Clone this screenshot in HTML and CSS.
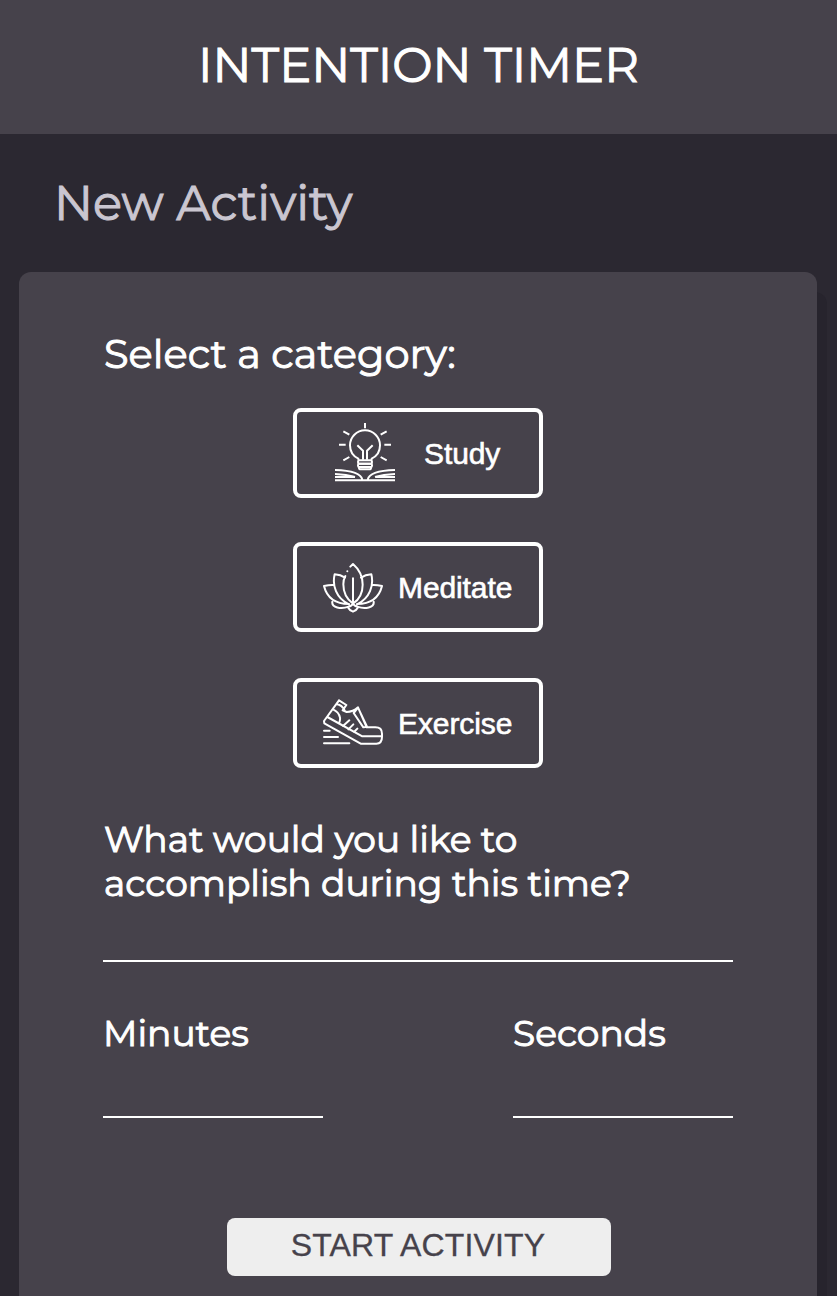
FILE: index.html
```
<!DOCTYPE html>
<html lang="en">
<head>
<meta charset="utf-8">
<title>Intention Timer</title>
<link rel="stylesheet" href="styles.css">
</head>
<body>
<header class="header"><h1 class="title">INTENTION TIMER</h1></header>
<main class="main">
<h2 class="subtitle">New Activity</h2>
<form class="card">
<p class="category-label">Select a category:</p>
<div class="categories">
<button type="button" class="category study">
<svg class="icon" viewBox="150 67 180 180"><path d="M240 67v16M175 92l18 10M305 92l-18 10M162 132h20M298 132h20M175 179l18-10M305 179l-18-10M220 178v-4C203 166 195 150 195 134a45 45 0 0 1 90 0c0 16-8 32-25 40v4M217 134l17 16v27M263 134l-17 16v27"/><rect x="219" y="179" width="42" height="10" rx="4"/><rect x="219" y="189" width="42" height="10" rx="4"/><path d="M222 199v3q0 4 5 4h26q5 0 5-4v-3M150 239h180M150 208c40 1 78 8 82 29M330 208c-40 1-78 8-82 29M150 220q35 2 60 9M150 229h60M330 220q-35 2-60 9M330 229h-60"/></svg>
<span>Study</span></button>
<button type="button" class="category">
<svg class="icon" viewBox="114 66 180 180"><path d="M204 130v77M196 95l8-8c15 13 29 36 29 62 0 24-11 45-29 57-20-14-29-34-29-58 0-9 2-18 6-25M187 109v.1M180 128q-13-9-31-10c-8 33 4 71 43 90M228 128q13-9 31-10c8 33-4 71-43 90M147 150q-13-1-30 3c8 32 32 54 75 54M261 150q13-1 30 3c-8 32-32 54-75 54M142 200c-3 18 26 23 49 15M266 200c3 18-26 23-49 15M188 216q10-2 16-9 6 7 16 9-6 11-16 14-10-3-16-14z"/></svg>
<span>Meditate</span></button>
<button type="button" class="category exercise">
<svg class="icon" viewBox="114 63 180 180"><path d="M162 85l-45 62 1 7 109 61h47c14 0 17-9 17-20v-10c0-13-7-19-20-19h-26l-26-60q-15 14-34 14l-12-5 11-16-22-14M127 135l105 58h59M154 96q18 3 25 20M144 112q18 8 21 25c1 8-1 13-3 18M206 123l13-16 27 57-11 2zM174 162l19-17M190 172l15-15M207 180l10-10M117 176h17M117 195h42M117 214h76"/></svg>
<span>Exercise</span></button>
</div>
<label class="question"><span class="question-text"><span class="line">What would you like to</span><span class="line">accomplish during this time?</span></span><input class="field"></label>
<div class="times">
<label class="time"><span>Minutes</span><input class="field"></label>
<label class="time"><span>Seconds</span><input class="field"></label>
</div>
<button type="button" class="start">START ACTIVITY</button>
</form>
</main>
</body>
</html>
```
FILE: styles.css
```
* { box-sizing: border-box; }
body { margin: 0; background: #2b2831; color: #fff; font-family: Montserrat, Inter, sans-serif; -webkit-text-stroke: 1px; }
h1, h2, p { margin: 0; font-weight: 400; white-space: nowrap; }
.header { height: 134px; padding-top: 35px; background: #46424b; text-align: center; }
.title { font-size: 48px; line-height: 60px; }
.main { height: 1162px; overflow: hidden; }
.subtitle { height: 138px; padding: 39px 0 0 54px; color: #cac6d0; font-size: 48px; line-height: 60px; }
.card { height: 1024px; margin: 0 20px 0 19px; padding: 57px 84px 0; border-radius: 12px 12px 0 0; background: #46424b; box-shadow: 10px 20px #27242d; }
.category-label { height: 79px; padding-left: 1px; font-size: 40px; line-height: 50px; }
.categories { display: flex; flex-direction: column; align-items: center; gap: 44px; }
.category { display: flex; align-items: center; gap: 15px; width: 250px; height: 90px; padding: 0 0 0 26px; border: 4px solid #fff; border-radius: 8px; background: none; color: #fff; font: 30px "Liberation Sans", sans-serif; -webkit-text-stroke: .6px #fff; }
.category span { padding-top: 1px; letter-spacing: -.1px; }
.study { gap: 29px; padding-left: 38px; }
.exercise { margin-top: 2px; }
.icon { flex: none; width: 60px; height: 60px; fill: none; stroke: #fff; stroke-width: 6; stroke-linecap: round; stroke-linejoin: round; }
.study .icon { stroke-linecap: butt; }
.question { display: block; height: 195px; margin-top: 49px; }
.question-text, .line { display: block; white-space: nowrap; }
.question-text { height: 103px; padding-left: 1px; font-size: 36px; line-height: 44px; }
.field { display: block; width: 100%; height: 42px; padding: 0; border: 0; border-bottom: 2px solid #fff; background: none; color: #fff; }
.times { display: flex; justify-content: space-between; margin-top: -1px; }
.time { width: 220px; font-size: 36px; line-height: 44px; }
.time .field { margin-top: 63px; height: 44px; }
.time span { display: block; height: 0; }
.start { display: block; width: 384px; height: 58px; margin: 100px auto 0 124px; padding: 0 2px 4px 0; border: 0; border-radius: 8px; background: #eee; color: #46424b; font: 32px "Liberation Sans", sans-serif; letter-spacing: .15px; -webkit-text-stroke: .3px #46424b; }
```
